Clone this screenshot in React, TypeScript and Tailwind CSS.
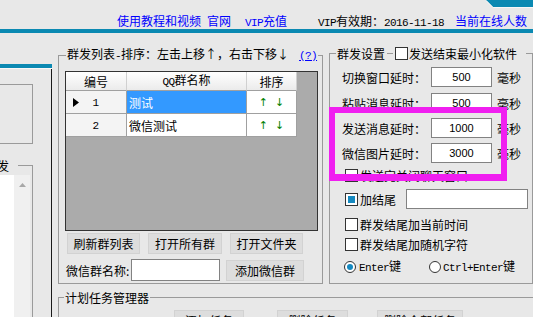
import type { ReactNode } from "react";

// latin runs in the old bitmap-font look: narrow, evenly spaced
function Lt({ children }: { children: ReactNode }) {
  return (
    <span className="font-['Liberation_Mono',monospace] text-[11px] tracking-[-0.6px]">{children}</span>
  );
}

function Check({ checked = false }: { checked?: boolean }) {
  return (
    <span className="flex h-[13px] w-[13px] shrink-0 items-center justify-center border border-[#333] bg-white">
      {checked && <span className="h-[7px] w-[7px] bg-[#1589c0]" />}
    </span>
  );
}

function Radio({ checked = false }: { checked?: boolean }) {
  return (
    <span className="flex h-[12px] w-[12px] shrink-0 items-center justify-center rounded-full border border-[#333] bg-white">
      {checked && <span className="h-[6px] w-[6px] rounded-full bg-[#1589c0]" />}
    </span>
  );
}

function Btn({ children, className = "" }: { children: ReactNode; className?: string }) {
  return (
    <button
      className={`flex h-[21px] shrink-0 items-center justify-center border border-[#d2d2d2] bg-[#dddddd] leading-[13px] ${className}`}
    >
      {children}
    </button>
  );
}

const DELAYS = [
  { label: "切换窗口延时：", value: "500", mt: "mt-[7px]" },
  { label: "粘贴消息延时：", value: "500", mt: "mt-[6px]" },
  { label: "发送消息延时：", value: "1000", mt: "mt-[5px]" },
  { label: "微信图片延时：", value: "3000", mt: "mt-[5px]" },
];

const ROWS = [
  { no: "1", name: "测试", current: true },
  { no: "2", name: "微信测试", current: false },
];

function GroupGrid() {
  return (
    <div className="mt-[8px] h-[160px] w-[253px] border border-[#333] bg-[#ababab]">
      <div className="grid w-[231px] grid-cols-[61px_120px_50px]">
        {["编号", "QQ群名称", "排序"].map((h) => (
          <div
            key={h}
            className="flex h-[19px] items-center justify-center border-b border-r border-b-[#a0a0a0] border-r-[#d0d0d0] bg-linear-to-b from-white to-[#ebebeb]"
          >
            {h === "QQ群名称" ? (
              <span>
                <Lt>QQ</Lt>群名称
              </span>
            ) : (
              h
            )}
          </div>
        ))}
        {ROWS.map((r) => (
          <div key={r.no} className="contents">
            <div className="flex h-[23px] items-center border-b border-r border-[#a0a0a0] bg-[#f4f4f4]">
              <span className="ml-[7px] w-[6px]">
                {r.current && (
                  <svg width="6" height="9" viewBox="0 0 6 9">
                    <polygon points="0,0 6,4.5 0,9" fill="#000" />
                  </svg>
                )}
              </span>
              <span className="mr-[14px] flex-1 text-center">
                <Lt>{r.no}</Lt>
              </span>
            </div>
            <div
              className={`flex h-[23px] items-center border-b border-r border-[#a0a0a0] pl-[2px] ${
                r.current ? "bg-[#3399ff] text-white" : "bg-white"
              }`}
            >
              {r.name}
            </div>
            <div className="flex h-[23px] items-center justify-center gap-[7px] border-b border-r border-[#a0a0a0] bg-white font-['DejaVu_Sans',sans-serif] text-[11px] text-[#008000]">
              <span>↑</span>
              <span>↓</span>
            </div>
          </div>
        ))}
      </div>
    </div>
  );
}

export default function App() {
  return (
    <div className="relative h-[317px] w-[533px] overflow-hidden bg-[#e8e8e8] font-['Noto_Sans_CJK_SC',sans-serif] text-[12px] leading-[13px] text-black">
      <svg className="absolute right-0 top-0" width="47" height="9" viewBox="0 0 47 9">
        <polygon points="0,0 47,0 47,7 7,7" fill="#0b89b2" />
        <polyline points="0,0.5 7,7.5 47,7.5" fill="none" stroke="#f7f7f7" strokeWidth="1" />
      </svg>

      {/* top links */}
      <div className="flex h-[29px] items-start whitespace-nowrap pl-[117px] pt-[14px]">
        <span className="text-[#0000ff]">使用教程和视频</span>
        <span className="ml-[6px] text-[#0000ff]">官网</span>
        <span className="ml-[14px] text-[#0000ff]">
          <Lt>VIP</Lt>充值
        </span>
        <span className="ml-[31px]">
          <Lt>VIP</Lt>有效期：<Lt>2016-11-18</Lt>
        </span>
        <span className="ml-[11px] text-[#0000ff]">当前在线人数</span>
      </div>
      <div className="h-[4px] bg-[#0b89b2]" />

      <div className="flex">
        {/* left side panel, mostly cut off */}
        <div className="flex w-[52px] shrink-0 flex-col pt-[31px]">
          <div className="h-[4px] bg-[#0b89b2]" />
          <div className="h-px bg-[#f8f8f8]" />
          <div className="flex h-[248px] flex-col border-r border-[#1a1a1a]">
            <div className="mt-[15px] h-[60px] w-[33px] border-b border-r border-t border-[#9a9a9a]" />
            <div className="mt-[15px] flex h-[13px] w-[33px]">
              <span className="-ml-[3px] w-[12px]">发</span>
              <span className="ml-[9px] h-[7px] w-[15px] self-end border-r border-t border-[#9a9a9a]" />
            </div>
            <div className="flex w-[33px] flex-1 border-r border-[#9a9a9a] pt-[3px]">
              <div className="w-[14px] bg-white" />
              <div className="flex w-[16px] justify-center bg-[#f0f0f0] pt-[8px]">
                <svg width="7" height="4" viewBox="0 0 7 4">
                  <polygon points="0,4 3.5,0 7,4" fill="#a8a8a8" />
                </svg>
              </div>
            </div>
          </div>
        </div>

        <div className="ml-[6px] flex flex-col pt-[14px]">
          <div className="flex">
            {/* group list */}
            <fieldset className="h-[237px] w-[265px] shrink-0 border border-[#9a9a9a]">
              <legend className="ml-[7px] whitespace-nowrap px-[1px] leading-[13px]">
                群发列表<Lt>-</Lt>排序：左击上移↑，右击下移↓
                <span className="ml-[10px] text-[#0000ff] underline">
                  <Lt>(?)</Lt>
                </span>
              </legend>
              <div className="flex flex-col pl-[6px]">
                <GroupGrid />
                <div className="mt-[2px] flex pl-[2px]">
                  <Btn className="w-[73px]">刷新群列表</Btn>
                  <Btn className="ml-[8px] w-[74px]">打开所有群</Btn>
                  <Btn className="ml-[8px] w-[73px]">打开文件夹</Btn>
                </div>
                <div className="mt-[5px] flex items-center">
                  <span className="w-[66px] pl-[1px]">微信群名称:</span>
                  <input readOnly className="h-[22px] w-[89px] border border-[#828282] bg-white" />
                  <Btn className="ml-[6px] h-[20px] w-[78px]">添加微信群</Btn>
                </div>
              </div>
            </fieldset>

            {/* send settings */}
            <fieldset className="ml-[6px] h-[237px] w-[204px] shrink-0 border border-[#9a9a9a]">
              <legend className="ml-[6px] pl-[1px] pr-[9px]">
                <span className="flex h-[13px] items-center whitespace-nowrap">
                  群发设置
                  <span className="mx-[2px] h-px w-[6px] bg-[#9a9a9a]" />
                  <Check />
                  <span className="ml-[1px]">发送结束最小化软件</span>
                </span>
              </legend>
              <div className="flex flex-col pl-[12px]">
                {DELAYS.map((d) => (
                  <div key={d.label} className={`flex h-[20px] items-center ${d.mt}`}>
                    <span className="w-[89px]">{d.label}</span>
                    <input
                      readOnly
                      value={d.value}
                      className="h-[20px] w-[61px] border border-[#828282] bg-white text-center font-['Liberation_Sans',sans-serif] text-[11px]"
                    />
                    <span className="ml-[5px]">毫秒</span>
                  </div>
                ))}
                <div className="ml-[3px] mt-[5px] flex h-[14px] items-center gap-[2px]">
                  <Check />
                  <span>发送完关闭聊天窗口</span>
                </div>
                <div className="ml-[3px] mt-[7px] flex h-[20px] items-center">
                  <Check checked />
                  <span className="ml-[2px]">加结尾</span>
                  <input readOnly className="ml-[10px] h-[20px] w-[122px] border border-[#828282] bg-white" />
                </div>
                <div className="ml-[3px] mt-[8px] flex h-[14px] items-center gap-[2px]">
                  <Check />
                  <span>群发结尾加当前时间</span>
                </div>
                <div className="ml-[3px] mt-[6px] flex h-[14px] items-center gap-[2px]">
                  <Check />
                  <span>群发结尾加随机字符</span>
                </div>
                <div className="ml-[2px] mt-[9px] flex h-[13px] items-center whitespace-nowrap">
                  <Radio checked />
                  <span className="ml-[3px]">
                    <Lt>Enter</Lt>键
                  </span>
                  <span className="ml-[28px]">
                    <Radio />
                  </span>
                  <span className="ml-[2px]">
                    <Lt>Ctrl+Enter</Lt>键
                  </span>
                </div>
              </div>
            </fieldset>
          </div>

          {/* scheduled tasks */}
          <fieldset className="mt-[7px] h-[60px] w-[490px] shrink-0 border border-[#9a9a9a]">
            <legend className="ml-[5px] px-[1px]">计划任务管理器</legend>
            <div className="flex pl-[115px] pt-[6px]">
              <Btn className="w-[70px]">添加任务</Btn>
              <Btn className="ml-[33px] w-[71px]">删除任务</Btn>
              <Btn className="ml-[29px] w-[86px]">删除全部任务</Btn>
            </div>
          </fieldset>
        </div>
      </div>

      {/* highlight drawn over the screenshot */}
      <div className="pointer-events-none absolute left-[329px] top-[107px] h-[74px] w-[178px] border-[6px] border-b-[7px] border-[#f01ff0]" />
    </div>
  );
}
